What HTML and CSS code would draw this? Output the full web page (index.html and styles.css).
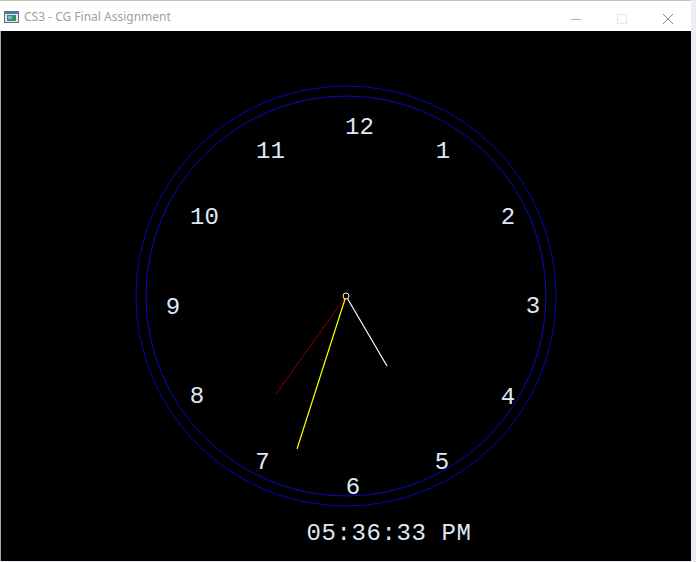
FILE: index.html
```html
<!DOCTYPE html>
<html>
<head>
<meta charset="utf-8">
<title>CS3 - CG Final Assignment</title>
<link rel="stylesheet" href="styles.css">
</head>
<body>
<div class="window">
  <div class="titlebar">
    <svg class="app-icon" width="15" height="12" viewBox="0 0 15 12">
      <rect x="0.5" y="0.5" width="14" height="11" fill="#dfe8f0" stroke="#5a7088"/>
      <rect x="1" y="1" width="13" height="2" fill="#4a78b0"/>
      <rect x="3" y="4" width="9" height="6" fill="#3d8a5a"/>
      <rect x="4" y="5" width="4" height="3" fill="#7fb4d8"/>
    </svg>
    <span class="title">CS3 - CG Final Assignment</span>
    <div class="controls">
      <svg class="ctl" width="46" height="30" viewBox="0 0 46 30"><line x1="18" y1="18.5" x2="28" y2="18.5" stroke="#b8b070" stroke-width="1"/></svg>
      <svg class="ctl" width="46" height="30" viewBox="0 0 46 30"><rect x="18.5" y="13.5" width="9" height="9" fill="none" stroke="#ecead0" stroke-width="1"/></svg>
      <svg class="ctl" width="46" height="30" viewBox="0 0 46 30"><path d="M18 13 L28 23 M28 13 L18 23" stroke="#8a8a80" stroke-width="1"/></svg>
    </div>
  </div>
  <div class="client">
    <svg class="canvas" width="690" height="530" viewBox="0 0 690 530">
      <circle cx="345" cy="265" r="210" fill="none" stroke="#0808b8" stroke-width="1"/>
      <circle cx="345" cy="265" r="200" fill="none" stroke="#0808c8" stroke-width="1"/>
      <g class="nums">
        <text x="358.5" y="103">12</text>
        <text x="442" y="126.5">1</text>
        <text x="507" y="193">2</text>
        <text x="532" y="282">3</text>
        <text x="507" y="372.5">4</text>
        <text x="441" y="438">5</text>
        <text x="352" y="463">6</text>
        <text x="261.5" y="438">7</text>
        <text x="196" y="371.5">8</text>
        <text x="172" y="282.5">9</text>
        <text x="203.5" y="192.5">10</text>
        <text x="269.5" y="126.5">11</text>
      </g>
      <line x1="345" y1="265" x2="275" y2="363" stroke="#8a0000" stroke-width="1"/>
      <line x1="345" y1="265" x2="296" y2="418" stroke="#ffff00" stroke-width="1.2"/>
      <line x1="345" y1="265" x2="386" y2="335" stroke="#ffffff" stroke-width="1.2"/>
      <circle cx="345" cy="265" r="3" fill="#000" stroke="#fffbd0" stroke-width="1"/>
      <text class="time" x="305.5" y="508.5">05:36:33 PM</text>
    </svg>
  </div>
</div>
</body>
</html>
```

FILE: styles.css
```css
html, body {
  margin: 0;
  padding: 0;
}
body {
  width: 696px;
  height: 562px;
  background: #eeebf3;
  overflow: hidden;
}
.window {
  width: 691px;
  height: 561px;
  display: flex;
  flex-direction: column;
  background: #ffffff;
  border-top: 1px solid #c8c4b8;
  box-sizing: border-box;
}
.titlebar {
  height: 30px;
  display: flex;
  align-items: center;
  padding-left: 4px;
  background: #ffffff;
  flex: none;
}
.app-icon {
  flex: none;
  margin-top: 2px;
}
.title {
  margin-left: 5px;
  font-family: "Noto Sans", "Open Sans", sans-serif;
  font-size: 12px;
  color: #a2a29a;
  margin-top: 1px;
}
.controls {
  margin-left: auto;
  display: flex;
  margin-right: 0;
}
.ctl {
  display: block;
}
.client {
  flex: 1;
  background: #000000;
  border-left: 1px solid #a8a8a8;
  position: relative;
}
.canvas {
  display: block;
}
.nums text {
  font-family: "Liberation Mono", monospace;
  font-size: 24px;
  fill: #dfe7f6;
  text-anchor: middle;
}
.time {
  font-family: "Liberation Mono", monospace;
  font-size: 24px;
  letter-spacing: 0.6px;
  fill: #dfe7f6;
}
```
